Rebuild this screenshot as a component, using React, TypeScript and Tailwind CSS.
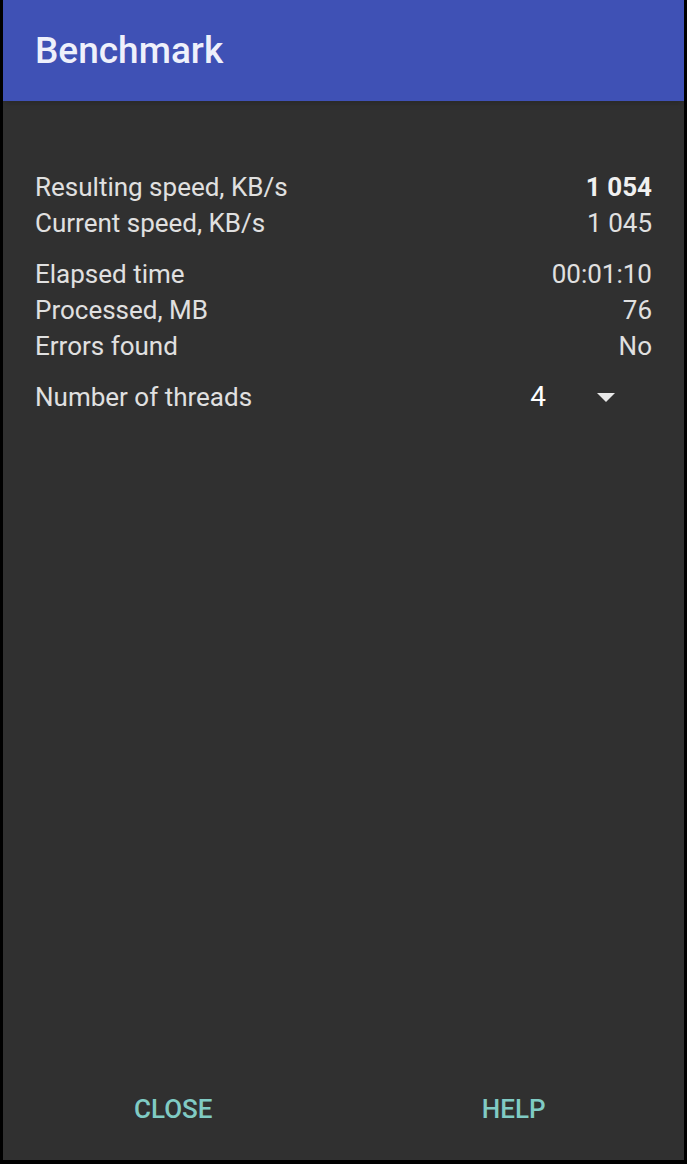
import React from 'react';

const groups = [
  [
    { label: 'Resulting speed, KB/s', value: '1 054', bold: true },
    { label: 'Current speed, KB/s', value: '1 045' },
  ],
  [
    { label: 'Elapsed time', value: '00:01:10' },
    { label: 'Processed, MB', value: '76' },
    { label: 'Errors found', value: 'No' },
  ],
];

const App = () => {
  return (
    <div className="w-[687px] h-[1164px] bg-black pl-[3px] pr-[3px] pb-[4px] font-['Roboto','Liberation_Sans',sans-serif]">
      <div className="h-full flex flex-col bg-[#303030]">
        {/* Title bar */}
        <div className="h-[101px] flex items-center px-[32px] bg-[#3f51b5] shadow-md">
          <h1 className="text-[37px] font-medium text-[#eef0fb] leading-none">Benchmark</h1>
        </div>

        {/* Stats */}
        <div className="flex-1 px-[32px] pt-[68px] text-[26px] leading-[36px] text-[#e0e0e0]">
          {groups.map((group, gi) => (
            <div key={gi} className="mb-[15px]">
              {group.map((row) => (
                <div key={row.label} className="flex justify-between">
                  <span>{row.label}</span>
                  <span className={row.bold ? 'font-bold text-[#f0f0f0]' : ''}>{row.value}</span>
                </div>
              ))}
            </div>
          ))}

          <div className="flex justify-between items-center">
            <span>Number of threads</span>
            <div className="flex items-center mr-[37px]">
              <span className="text-[28px] text-white">4</span>
              <svg width="18" height="9" viewBox="0 0 18 9" className="ml-[51px]">
                <path d="M0 0 L18 0 L9 9 Z" fill="#e8e8e8" />
              </svg>
            </div>
          </div>
        </div>

        {/* Buttons */}
        <div className="h-[102px] flex">
          <button className="flex-1 text-[26px] font-medium text-[#80cbc4] uppercase">Close</button>
          <button className="flex-1 text-[26px] font-medium text-[#80cbc4] uppercase">Help</button>
        </div>
      </div>
    </div>
  );
};

export default App;
